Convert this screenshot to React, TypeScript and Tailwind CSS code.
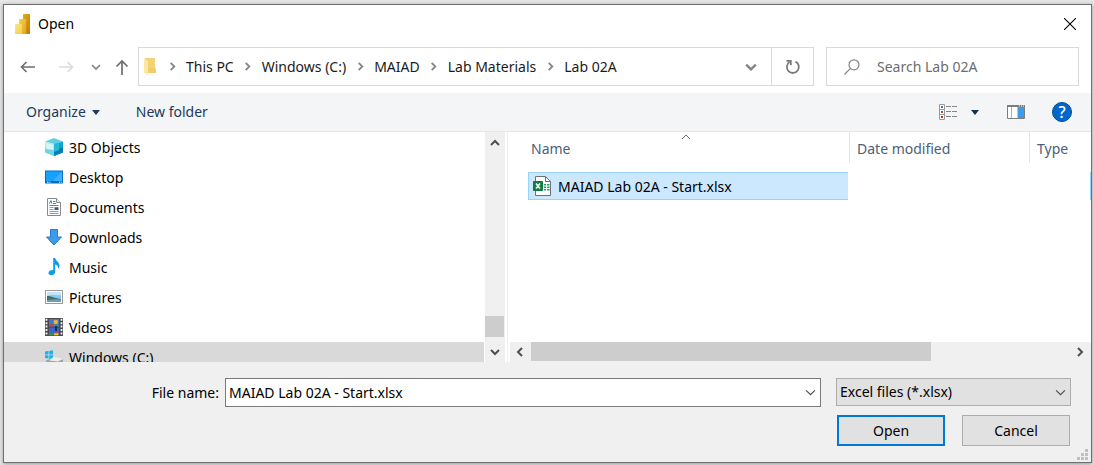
import type { ReactNode } from "react";

type Dir = "up" | "down" | "left" | "right";

function Chevron({ dir, className }: { dir: Dir; className: string }) {
  const d = { up: "M1 7 5 3l4 4", down: "M1 3l4 4 4-4", left: "M7 1 3 5l4 4", right: "M3 1l4 4-4 4" }[dir];
  return (
    <svg viewBox="0 0 10 10" className={className} fill="none" stroke="currentColor" aria-hidden="true">
      <path d={d} />
    </svg>
  );
}

function PowerBiLogo() {
  return (
    <svg viewBox="0 0 15 20" className="h-5 w-[15px]" aria-hidden="true">
      <defs>
        <linearGradient id="pb1" x1="0" y1="0" x2="1" y2="1">
          <stop offset="0" stopColor="#e8ac12" />
          <stop offset="1" stopColor="#c47a08" />
        </linearGradient>
        <linearGradient id="pb2" x1="0" y1="0" x2="1" y2="1">
          <stop offset="0" stopColor="#f6d34c" />
          <stop offset="1" stopColor="#dfa61c" />
        </linearGradient>
        <linearGradient id="pb3" x1="0" y1="0" x2="1" y2="1">
          <stop offset="0" stopColor="#fae58a" />
          <stop offset="1" stopColor="#f3cf47" />
        </linearGradient>
      </defs>
      <rect x="8" y="0" width="7" height="20" rx="0.6" fill="url(#pb1)" />
      <rect x="4" y="5" width="7" height="15" rx="0.6" fill="url(#pb2)" />
      <rect x="0" y="10" width="7" height="10" rx="0.6" fill="url(#pb3)" />
    </svg>
  );
}

function FolderIcon() {
  return (
    <svg viewBox="0 0 12 17" className="h-[17px] w-3 shrink-0" aria-hidden="true">
      <path d="M1 0h10v10.500h1V15H3z" fill="#f0cd6c" />
      <path d="M1 0h10v10H3z" fill="#f3d37a" />
      <path d="M0 .5 4 3v14L0 14.500z" fill="#ffe79f" />
    </svg>
  );
}

function IconBox({ children }: { children: ReactNode }) {
  return (
    <svg viewBox="0 0 18 18" className="size-[18px] shrink-0" aria-hidden="true">
      {children}
    </svg>
  );
}

const cubeIcon = (
  <IconBox>
    <path d="M0 3.500 9 0l9 3.500L9 6z" fill="#5fd0dc" />
    <path d="M0 3.500 9 6v12L0 14.500z" fill="#b5ecf0" />
    <path d="M0 9 9 12v6L0 14.500z" fill="#6fd6df" />
    <path d="M1 5l7 2v5L1 11z" fill="#d3f5f6" />
    <path d="M18 3.500 9 6v12l9-3.500z" fill="#12a3cf" />
    <path d="M18 9 9 13v5l9-3.500z" fill="#0a7fb5" />
    <path d="M9 6l5-1.400V12L9 14z" fill="#27b9d8" />
  </IconBox>
);

const desktopIcon = (
  <IconBox>
    <rect x="0" y="2.500" width="18" height="13" fill="#0b6cb8" />
    <rect x="1" y="3.500" width="16" height="9.500" fill="#18a0ff" />
    <path d="M17 3.500V13H8z" fill="#3db0ff" />
    <path d="M2 14.200h1.500M4.500 14.200h1M14 14.200h1M15.800 14.200h1" stroke="#fff" />
  </IconBox>
);

const documentIcon = (
  <IconBox>
    <path d="M2.500.5h9l4 4v13h-13z" fill="#fff" stroke="#8a8a8a" />
    <path d="M11.500.5v4h4" fill="#eee" stroke="#8a8a8a" />
    <path d="M4.500 5.500 6 2.500l.8 3M8 3.500h2.500M8 5.500h3M4.500 7.500h9" fill="none" stroke="#2f8fd8" />
    <path d="M4.500 9.500h4M4.500 11.500h4M4.500 13.500h9M4.500 15.500h9" stroke="#9a9a9a" />
    <path d="M9.500 9.500h4" stroke="#2f8fd8" />
    <rect x="9.500" y="10" width="4" height="2" fill="#355c86" />
  </IconBox>
);

const downloadIcon = (
  <IconBox>
    <path d="M5.500 1.500h7V9h4L9 17 1.500 9h4z" fill="#3c9bea" stroke="#2b7cc9" />
  </IconBox>
);

const musicIcon = (
  <IconBox>
    <path
      d="M8.200 0h2c.3 2.800 4.300 4 4.300 7.500 0 1.400-.6 2.600-1.500 3.500.5-2.600-.7-4-2.800-4.500V14c0 2-1.800 3.200-3.800 3.200-1.800 0-2.900-.9-2.900-2.200 0-1.600 1.700-2.900 4.700-2.900z"
      fill="#0f9bea"
    />
  </IconBox>
);

const pictureIcon = (
  <IconBox>
    <rect x=".5" y="2.500" width="17" height="13" fill="#fff" stroke="#9a9a9a" />
    <rect x="2" y="4" width="14" height="10" fill="#8ec5f2" />
    <path d="M2 4h14v3c-5 1-8-1-14 1z" fill="#c6e2f8" />
    <path d="M2 8c3-.5 5 1.500 14 3v1H2z" fill="#3c7062" />
    <path d="M2 12c5-1 9-1 14-.5V14H2z" fill="#6f9cb9" />
  </IconBox>
);

const videoIcon = (
  <IconBox>
    <rect x="0" y="0" width="18" height="18" fill="#4a4a4a" />
    <path d="M1.500.8v17M16.500.8v17" stroke="#f2f2f2" strokeWidth="1.800" strokeDasharray="2 1.400" />
    <rect x="4" y="1" width="10" height="7.500" fill="#3f77d8" />
    <rect x="4" y="9.800" width="10" height="7.500" fill="#3568cb" />
    <circle cx="10.800" cy="4" r="2.300" fill="#e9b52d" />
    <path d="M4 6.200h4v2.300H4zM10 13.500h3.500v1.300H10z" fill="#d8384a" />
    <path d="M9.500 6.500H13v2H9.500zM4 15.500h4v1.800H4z" fill="#3d9a43" />
    <path d="M9 15.300h4.500v2H9z" fill="#efc431" />
    <path d="M11 8v5" stroke="#1d1d1d" strokeWidth="1.600" />
  </IconBox>
);

const driveIcon = (
  <IconBox>
    <path d="M0 3.600 3.500 3v3.500H0zM4.200 2.900 8 2.300v4.200H4.200zM0 7.200h3.500v3.400L0 10.100zM4.200 7.200H8v4l-3.800-.5z" fill="#17b4f0" />
    <path d="M1 12.500 9 9.500l9 2V16H1z" fill="#9fa2a5" />
    <path d="M9 8.500 18 11l-5 2.500-9-1z" fill="#eeeeee" />
  </IconBox>
);

const places = [
  { label: "3D Objects", icon: cubeIcon },
  { label: "Desktop", icon: desktopIcon },
  { label: "Documents", icon: documentIcon },
  { label: "Downloads", icon: downloadIcon },
  { label: "Music", icon: musicIcon },
  { label: "Pictures", icon: pictureIcon },
  { label: "Videos", icon: videoIcon },
  { label: "Windows (C:)", icon: driveIcon, selected: true },
];

const crumbs = ["This PC", "Windows (C:)", "MAIAD", "Lab Materials", "Lab 02A"];

function ExcelIcon() {
  return (
    <svg viewBox="0 0 18 20" className="h-5 w-[18px] shrink-0" aria-hidden="true">
      <path d="M2.500.5h10l5 5v14h-15z" fill="#fff" stroke="#6f6f6f" />
      <path d="M12.500.5v5h5" fill="none" stroke="#6f6f6f" />
      <path d="M11 8h2v1.500h-2zM14 8h2.500v1.500H14zM11 10.500h2V12h-2zM14 10.500h2.500V12H14zM11 13h2v1.500h-2zM14 13h2.500v1.500H14z" fill="#21a366" />
      <rect x="0" y="5" width="10" height="10" rx=".8" fill="#107c41" />
      <path d="M3 7.500 7 12.500M7 7.500 3 12.500" stroke="#fff" strokeWidth="1.600" />
    </svg>
  );
}

function NavButtons() {
  return (
    <div className="flex w-[134px] shrink-0 items-center pl-4 text-[#6e6e6e]">
      <button aria-label="Back" className="w-4">
        <svg viewBox="0 0 16 12" className="h-3 w-4" fill="none" stroke="currentColor" strokeWidth="1.600">
          <path d="M15 6H1.500M6.500 1l-5 5 5 5" />
        </svg>
      </button>
      <button aria-label="Forward" disabled className="ml-[22px] w-4 text-[#dcdcdc]">
        <svg viewBox="0 0 16 12" className="h-3 w-4" fill="none" stroke="currentColor" strokeWidth="1.600">
          <path d="M1 6h13.500M9.500 1l5 5-5 5" />
        </svg>
      </button>
      <button aria-label="Recent locations" className="ml-[17px] text-[#858585]">
        <Chevron dir="down" className="size-[10px] stroke-[1.700]" />
      </button>
      <button aria-label="Up one level" className="ml-[14px]">
        <svg viewBox="0 0 14 16" className="h-4 w-[14px]" fill="none" stroke="currentColor" strokeWidth="1.700">
          <path d="M7 16V2M1.500 7.500 7 2l5.500 5.500" />
        </svg>
      </button>
    </div>
  );
}

function AddressBar() {
  return (
    <div className="flex min-w-0 flex-1 items-stretch border border-[#d9d9d9]">
      <nav aria-label="Address" className="flex min-w-0 flex-1 items-center overflow-hidden whitespace-nowrap pl-[5px]">
        <FolderIcon />
        <span className="w-[2px]" />
        {crumbs.map((c) => (
          <span key={c} className="flex items-center">
            <span className="flex w-7 justify-center text-[#858585]">
              <Chevron dir="right" className="size-[9px] stroke-2" />
            </span>
            <a href="#" className="text-[#1b1b1b]">{c}</a>
          </span>
        ))}
      </nav>
      <button aria-label="Previous locations" className="flex w-10 items-center justify-center text-[#858585]">
        <Chevron dir="down" className="size-3 stroke-2" />
      </button>
      <button aria-label="Refresh" className="flex w-[42px] items-center justify-center border-l border-[#d9d9d9] text-[#7a7a7a]">
        <svg viewBox="0 0 16 16" className="size-4" fill="none" stroke="currentColor" strokeWidth="1.800">
          <path d="M10.500 2.600A6 6 0 1 1 4.500 3" />
          <path d="M1.500 1.900h4.300v4.300" />
        </svg>
      </button>
    </div>
  );
}

function Toolbar() {
  return (
    <div className="flex h-[39px] shrink-0 items-center border-b border-[#e4e6e8] bg-[#f4f5f7] pl-[22px] pr-[19px] text-[#1e395b]">
      <button className="flex items-center gap-[6px]">
        Organize
        <svg viewBox="0 0 8 5" className="h-[5px] w-2" fill="currentColor" aria-hidden="true"><path d="M0 0h8L4 5z" /></svg>
      </button>
      <button className="ml-9">New folder</button>
      <button aria-label="Change view" className="ml-auto flex items-center gap-[14px]">
        <svg viewBox="0 0 18 16" className="h-4 w-[18px]" fill="none">
          <path d="M.5.500h5v15h-5zM.5 5.500h5M.5 10.500h5" fill="#fff" stroke="#9a9a9a" />
          <path d="M2 2h2v2H2z" fill="#3877b8" />
          <path d="M2 7h2v2H2z" fill="#9a5a2e" />
          <path d="M2 12h2v2H2z" fill="#c9271e" />
          <path d="M7 2.500h5M13 2.500h5M7 7.500h5M13 7.500h5M7 12.500h5M13 12.500h5" stroke="#858585" />
        </svg>
        <svg viewBox="0 0 8 5" className="h-[5px] w-2" fill="#10305f"><path d="M0 0h8L4 5z" /></svg>
      </button>
      <button aria-label="Show the preview pane" className="ml-[28px]">
        <svg viewBox="0 0 18 14" className="h-[14px] w-[18px]">
          <path d="M.5.500h17v13H.5z" fill="#fff" stroke="#7d7d7d" />
          <path d="M0 0h18v2H0z" fill="#7d7d7d" />
          <path d="M12 1h1M14 1h1M16 1h1" stroke="#fff" />
          <path d="M4.500 2v11" stroke="#b0b0b0" />
          <path d="M10.500 2H17v11h-6.500z" fill="#3f9be8" />
        </svg>
      </button>
      <button
        aria-label="Get help"
        className="ml-[27px] flex size-5 items-center justify-center rounded-full border border-[#0b4a8a] bg-[#0067cc] text-base font-medium leading-none text-white"
      >
        ?
      </button>
    </div>
  );
}

function PlacesPane() {
  return (
    <div className="flex w-[501px] shrink-0">
      <ul className="min-w-0 flex-1 overflow-hidden">
        {places.map((p) => (
          <li key={p.label} className={p.selected ? "bg-[#d9d9d9]" : ""}>
            <a href="#" className="flex h-[30px] items-center gap-[6px] pl-[41px]">
              {p.icon}
              <span className="pt-px">{p.label}</span>
            </a>
          </li>
        ))}
      </ul>
      <div className="ml-px flex w-5 shrink-0 flex-col items-center bg-[#f0f0f0] pr-px text-[#505050]">
        <Chevron dir="up" className="mt-[6px] size-[10px] stroke-2" />
        <div className="flex-1" />
        <div className="h-[21px] w-[19px] self-start bg-[#cdcdcd]" />
        <Chevron dir="down" className="mb-[5px] mt-[10px] size-[10px] stroke-2" />
      </div>
    </div>
  );
}

function FilesPane() {
  return (
    <div className="ml-[2px] flex min-w-0 flex-1 flex-col border-l border-[#f0f0f0]">
      <div className="min-h-0 flex-1 overflow-hidden pl-5">
        <table className="w-full table-fixed border-separate border-spacing-0">
          <thead>
            <tr className="h-[31px] text-left text-[#4c607a]">
              <th className="relative w-[322px] border-r border-[#e5e5e5] p-0 pl-[3px] pt-[2px] font-normal">
                Name
                <Chevron dir="up" className="absolute left-[153px] top-0 size-[10px] text-[#6e6e6e]" />
              </th>
              <th className="w-[180px] border-r border-[#e5e5e5] p-0 pl-[7px] pt-[2px] font-normal">Date modified</th>
              <th className="p-0 pl-[7px] pt-[2px] font-normal">Type</th>
            </tr>
          </thead>
          <tbody>
            <tr>
              <td className="p-0 pt-[9px]">
                <div className="mr-[2px] flex h-7 items-center gap-[7px] border border-r-0 border-[#99d1ff] bg-[#cce8ff] pl-1">
                  <ExcelIcon />
                  <span className="pt-px">MAIAD Lab 02A - Start.xlsx</span>
                </div>
              </td>
              <td />
              <td className="p-0 pt-[9px]">
                <div className="ml-auto h-7 w-px bg-[#99d1ff]" />
              </td>
            </tr>
          </tbody>
        </table>
      </div>
      <div className="ml-[2px] flex h-5 items-center bg-[#f0f0f0] text-[#505050]">
        <span className="flex w-[21px] justify-center pr-[2px]">
          <Chevron dir="left" className="size-[10px] stroke-2" />
        </span>
        <div className="h-[19px] w-[400px] self-start bg-[#cdcdcd]" />
        <Chevron dir="right" className="ml-auto mr-[6px] size-[10px] stroke-2" />
      </div>
    </div>
  );
}

function Footer() {
  return (
    <form className="relative bg-[#f0f0f0] pb-4 pr-5 pt-4" onSubmit={(e) => e.preventDefault()}>
      <div className="flex items-start">
        <label htmlFor="file-name" className="w-[221px] shrink-0 pr-[6px] text-right leading-[29px]">File name:</label>
        <div className="flex h-[29px] min-w-0 flex-1 items-center border border-[#7a7a7a] bg-white">
          <input id="file-name" defaultValue="MAIAD Lab 02A - Start.xlsx" className="min-w-0 flex-1 pl-[3px] outline-none" />
          <button type="button" aria-label="Recent file names" className="w-5 text-[#4a4a4a]">
            <Chevron dir="down" className="mx-auto size-[11px]" />
          </button>
        </div>
        <div className="relative ml-[15px] w-[235px] shrink-0 text-black">
          <select aria-label="File type" className="block h-7 w-full appearance-none border border-[#adadad] bg-[#e1e1e1] pl-[3px] outline-none">
            <option>Excel files (*.xlsx)</option>
          </select>
          <Chevron dir="down" className="pointer-events-none absolute right-[5px] top-[9px] size-[11px] text-[#4a4a4a]" />
        </div>
      </div>
      <div className="mt-2 flex justify-end gap-[17px] pr-px">
        <button type="submit" className="h-[31px] w-[108px] border-2 border-[#0078d7] bg-[#e1e1e1]">Open</button>
        <button type="button" className="h-[31px] w-[108px] border border-[#adadad] bg-[#e1e1e1]">Cancel</button>
      </div>
      <svg viewBox="0 0 11 11" className="absolute bottom-[2px] right-[3px] size-[11px]" fill="#bfbfbf" aria-hidden="true">
        <path d="M8 0h3v3H8zM4 4h3v3H4zM8 4h3v3H8zM0 8h3v3H0zM4 8h3v3H4zM8 8h3v3H8z" />
      </svg>
    </form>
  );
}

export default function App() {
  return (
    <div className="flex h-screen flex-col bg-[#e6e6e6] pb-[2px] pl-[3px] pr-[2px] pt-1 font-['Noto_Sans','Open_Sans',sans-serif] text-sm leading-5 text-black">
      <main className="flex min-h-0 flex-1 flex-col border border-[#6f6f6f] bg-white shadow-[0_1px_4px_rgba(0,0,0,0.35)]">
        <header className="flex h-[38px] shrink-0 items-center pl-[11px] pr-[15px]">
          <PowerBiLogo />
          <h1 className="ml-2">Open</h1>
          <button aria-label="Close" className="ml-auto">
            <svg viewBox="0 0 12 12" className="size-3" stroke="#000" strokeWidth="1.100"><path d="M0 0l12 12M12 0 0 12" /></svg>
          </button>
        </header>
        <div className="mb-[7px] mt-1 flex h-[39px] shrink-0 pr-3">
          <NavButtons />
          <AddressBar />
          <label className="ml-3 flex w-[253px] shrink-0 items-center border border-[#d9d9d9] pl-[17px]">
            <svg viewBox="0 0 16 16" className="size-4 shrink-0" fill="none" stroke="#858585" strokeWidth="1.200">
              <circle cx="10" cy="5.800" r="5" />
              <path d="M6.400 9.400.5 15.500" />
            </svg>
            <input aria-label="Search Lab 02A" placeholder="Search Lab 02A" className="ml-[17px] min-w-0 flex-1 outline-none placeholder:text-[#6d6d6d]" />
          </label>
        </div>
        <Toolbar />
        <div className="flex min-h-0 flex-1 overflow-hidden">
          <PlacesPane />
          <FilesPane />
        </div>
        <Footer />
      </main>
    </div>
  );
}
